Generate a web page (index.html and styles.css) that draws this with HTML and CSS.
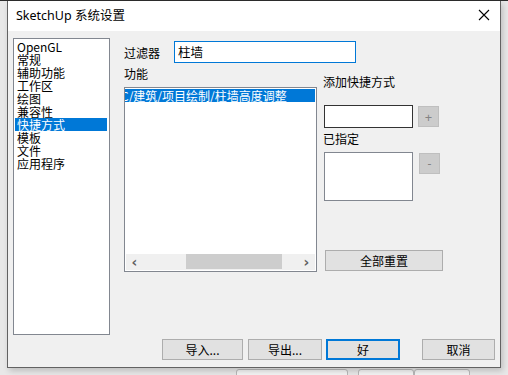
FILE: index.html
```html
<!DOCTYPE html>
<html lang="zh-CN">

<head>
  <meta charset="UTF-8">
  <title>SketchUp 系统设置</title>
  <link rel="stylesheet" href="styles.css">
</head>

<body>
  <div class="dialog">
    <div class="titlebar">
      <span class="title">SketchUp 系统设置</span>
      <svg class="close" width="12" height="12" viewBox="0 0 12 12">
        <path d="M1 1 L11 11 M11 1 L1 11" stroke="#000" stroke-width="1.1" fill="none" />
      </svg>
    </div>

    <div class="content">
      <div class="main">
        <!-- left category list -->
        <ul class="nav-list">
          <li>OpenGL</li>
          <li>常规</li>
          <li>辅助功能</li>
          <li>工作区</li>
          <li>绘图</li>
          <li>兼容性</li>
          <li class="selected">快捷方式</li>
          <li>模板</li>
          <li>文件</li>
          <li>应用程序</li>
        </ul>

        <div class="pane">
          <div class="filter-row">
            <span class="filter-label">过滤器</span>
            <div class="filter-input">柱墙</div>
          </div>

          <div class="columns">
            <div class="col-func">
              <div class="label">功能</div>
              <div class="func-list">
                <div class="func-rows">
                  <div class="func-row selected"><span>C/建筑/项目绘制/柱墙高度调整</span></div>
                </div>
                <div class="hscroll">
                  <span class="arrow">&lsaquo;</span>
                  <div class="track"><div class="thumb"></div></div>
                  <span class="arrow">&rsaquo;</span>
                </div>
              </div>
            </div>

            <div class="col-keys">
              <div class="label label-add">添加快捷方式</div>
              <div class="key-row">
                <div class="key-input"></div>
                <button class="small-btn">+</button>
              </div>
              <div class="label label-assigned">已指定</div>
              <div class="key-row key-row-list">
                <div class="assigned-list"></div>
                <button class="small-btn minus">-</button>
              </div>
              <button class="btn reset-btn">全部重置</button>
            </div>
          </div>
        </div>
      </div>

      <div class="footer">
        <button class="btn btn-import">导入...</button>
        <button class="btn btn-export">导出...</button>
        <button class="btn btn-ok">好</button>
        <button class="btn btn-cancel">取消</button>
      </div>
    </div>
  </div>

  <!-- bits of the window behind the dialog -->
  <div class="behind">
    <span class="behind-box box-a"></span>
    <span class="behind-box box-b"></span>
    <span class="behind-box box-c"></span>
  </div>
</body>

</html>
```

FILE: styles.css
```css
body {
  margin: 0;
  width: 508px;
  height: 375px;
  overflow: hidden;
  background: #e8e8e8;
  border-top: 1px solid #2b2b2b;
  box-sizing: border-box;
  font-family: "Noto Sans CJK SC", "Noto Sans", sans-serif;
  font-size: 12px;
  color: #000;
}

.dialog {
  margin-left: 7px;
  width: 494px;
  height: 367px;
  box-sizing: border-box;
  border: 1px solid #626262;
  border-top: none;
  background: #f0f0f0;
  box-shadow: 2px 3px 6px rgba(0, 0, 0, 0.18);
  position: relative;
}

.titlebar {
  height: 30px;
  background: #fff;
  display: flex;
  align-items: center;
  justify-content: space-between;
  padding: 0 10px 0 8px;
}

.title {
  font-family: "Noto Sans", "Noto Sans CJK SC", sans-serif;
  font-size: 12.5px;
  line-height: 30px;
  margin-top: -1px;
}

.close {
  display: block;
  margin-top: -2px;
}

.content {
  padding: 7px 0 0 5px;
}

.main {
  display: flex;
  height: 297px;
}

/* left list */
.nav-list {
  list-style: none;
  margin: 0;
  padding: 1px 2px 0 1px;
  width: 97px;
  height: 297px;
  box-sizing: border-box;
  background: #fff;
  border: 1px solid #828790;
}

.nav-list li {
  height: 13px;
  line-height: 13px;
  padding-left: 2px;
  white-space: nowrap;
}

.nav-list li.selected {
  background: #0078d7;
  color: #fff;
}

/* right pane */
.pane {
  margin-left: 14px;
  flex: 1;
}

.filter-row {
  display: flex;
  align-items: center;
  margin-top: 3px;
  height: 22px;
}

.filter-label {
  width: 50px;
}

.filter-input {
  width: 182px;
  height: 22px;
  box-sizing: border-box;
  border: 1px solid #0078d7;
  background: #fff;
  line-height: 20px;
  padding-left: 3px;
  font-size: 12.5px;
}

.columns {
  display: flex;
}

.label {
  height: 16px;
  line-height: 16px;
}

.col-func {
  width: 193px;
}

.col-func .label {
  margin-top: 3px;
}

.func-list {
  margin-top: 5px;
  height: 185px;
  box-sizing: border-box;
  border: 1px solid #828790;
  background: #fff;
  display: flex;
  flex-direction: column;
  overflow: hidden;
}

.func-rows {
  flex: 1;
  padding-top: 1px;
}

.func-row {
  height: 13px;
  line-height: 13px;
  margin-right: 1px;
  white-space: nowrap;
  overflow: hidden;
}

.func-row.selected {
  background: #0078d7;
  color: #fff;
}

.func-row span {
  display: inline-block;
  margin-left: -4px;
}

.hscroll {
  height: 16px;
  margin: 0 1px 1px 1px;
  background: #f0f0f0;
  display: flex;
  align-items: center;
}

.hscroll .arrow {
  width: 17px;
  text-align: center;
  font-family: "DejaVu Sans", sans-serif;
  font-weight: bold;
  font-size: 14px;
  line-height: 16px;
  color: #606060;
}

.track {
  flex: 1;
  height: 16px;
  position: relative;
}

.thumb {
  margin-left: 43px;
  width: 96px;
  height: 15px;
  background: #cdcdcd;
}

.col-keys {
  margin-left: 7px;
}

.label-add {
  margin-top: 11px;
  margin-left: -1px;
}

.key-row {
  display: flex;
  align-items: flex-start;
  margin-top: 15px;
}

.key-input {
  width: 89px;
  height: 23px;
  box-sizing: border-box;
  border: 1px solid #333;
  background: #fff;
}

.small-btn {
  margin: 1px 0 0 5px;
  width: 21px;
  height: 21px;
  padding: 0;
  box-sizing: border-box;
  border: 1px solid #bfbfbf;
  background: #cccccc;
  color: #838383;
  font-family: "Noto Sans", sans-serif;
  font-size: 13px;
  line-height: 18px;
}

.small-btn.minus {
  margin-left: 6px;
  font-size: 12px;
}

.label-assigned {
  margin-top: 3px;
  margin-left: -1px;
}

.key-row-list {
  margin-top: 5px;
}

.assigned-list {
  width: 89px;
  height: 49px;
  box-sizing: border-box;
  border: 1px solid #828790;
  background: #fff;
}

.btn {
  font-family: "Noto Sans CJK SC", sans-serif;
  font-size: 12px;
  height: 21px;
  padding: 0;
  box-sizing: border-box;
  border: 1px solid #adadad;
  background: #e1e1e1;
  color: #000;
  line-height: 18px;
}

.reset-btn {
  display: block;
  margin: 49px 0 0 1px;
  width: 118px;
}

/* bottom buttons */
.footer {
  display: flex;
  margin-top: 4px;
}

.btn-import {
  margin-left: 149px;
  width: 81px;
}

.btn-export {
  margin-left: 5px;
  width: 74px;
}

.btn-ok {
  margin-left: 4px;
  width: 74px;
  border: 2px solid #0078d7;
}

.btn-cancel {
  margin-left: 22px;
  width: 73px;
}

/* window behind */
.behind {
  display: flex;
  height: 8px;
  margin-top: 1px;
}

.behind-box {
  height: 10px;
  box-sizing: border-box;
  border: 1px solid #b8b8b8;
  border-radius: 3px;
  background: #f4f4f4;
}

.box-a {
  margin-left: 236px;
  width: 112px;
}

.box-b {
  margin-left: 10px;
  width: 56px;
}

.box-c {
  width: 56px;
}
```
